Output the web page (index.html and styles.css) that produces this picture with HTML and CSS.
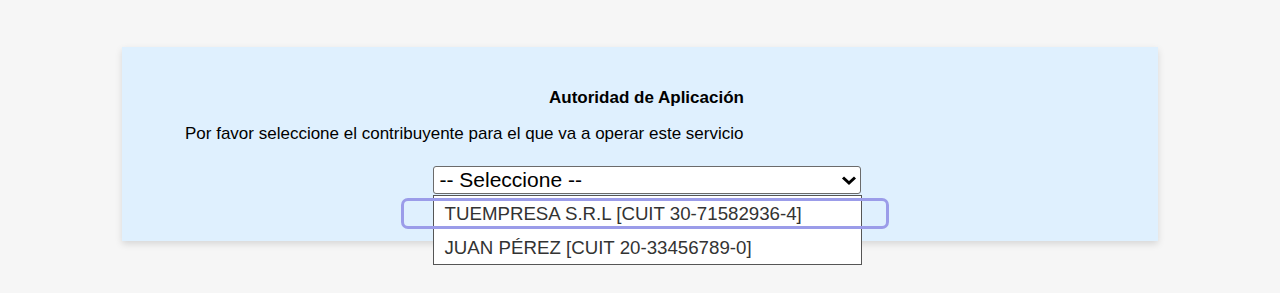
FILE: index.html
```html
<!DOCTYPE html>
<html lang="es">
<head>
  <meta charset="UTF-8" />
  <meta name="viewport" content="width=device-width, initial-scale=1.0" />
  <title>Autoridad de Aplicación</title>
  <link rel="stylesheet" href="styles.css">
</head>
<body>
  <div class="panel">
    <h2>Autoridad de Aplicación</h2>
    <p class="intro">Por favor seleccione el contribuyente para el que va a operar este servicio</p>

    <div class="picker">
      <div class="select-box">
        <span>-- Seleccione --</span>
        <svg class="chevron" width="16" height="11" viewBox="0 0 16 11">
          <path d="M2 2.5 L8 8 L14 2.5" fill="none" stroke="#000" stroke-width="3" />
        </svg>
      </div>
      <ul class="options">
        <li class="option">
          TUEMPRESA S.R.L [CUIT 30-71582936-4]
          <span class="focus-ring"></span>
        </li>
        <li class="option">JUAN PÉREZ [CUIT 20-33456789-0]</li>
      </ul>
    </div>
  </div>
</body>
</html>
```

FILE: styles.css
```css
body {
  font-family: Arial, 'Liberation Sans', sans-serif;
  background-color: #f6f6f6;
  margin: 0;
  padding: 0;
  height: 293px;
  overflow: hidden;
}

.panel {
  background-color: #dff0fe;
  margin: 47px 122px 0;
  height: 194px;
  padding: 41px 50px 0 63px;
  box-sizing: border-box;
  box-shadow: 0 3px 7px rgba(0,0,0,0.13);
}

h2 {
  margin: 0;
  font-size: 17px;
  line-height: 20px;
  text-align: center;
  color: #000;
}

.intro {
  margin: 16px 0 0;
  font-size: 17px;
  line-height: 20px;
  color: #000;
}

.picker {
  width: 428px;
  margin: 22px auto 0;
  position: relative;
}

.select-box {
  height: 28px;
  box-sizing: border-box;
  border: 1px solid #6b6b6b;
  border-radius: 3px;
  background: #fff;
  display: flex;
  align-items: center;
  justify-content: space-between;
  padding: 0 3px 0 6px;
  font-size: 21px;
  color: #000;
}

.options {
  list-style: none;
  margin: 1px 0 0;
  padding: 0;
  width: 429px;
  border: 1px solid #555;
  background: #fff;
  box-sizing: border-box;
}

.option {
  position: relative;
  height: 34px;
  line-height: 35px;
  padding-left: 11px;
  font-size: 18.7px;
  color: #333;
}

.focus-ring {
  position: absolute;
  left: -33px;
  right: -28px;
  top: 2px;
  height: 31px;
  box-sizing: border-box;
  border: 3px solid #9b9ce9;
  border-radius: 7px;
}
```
